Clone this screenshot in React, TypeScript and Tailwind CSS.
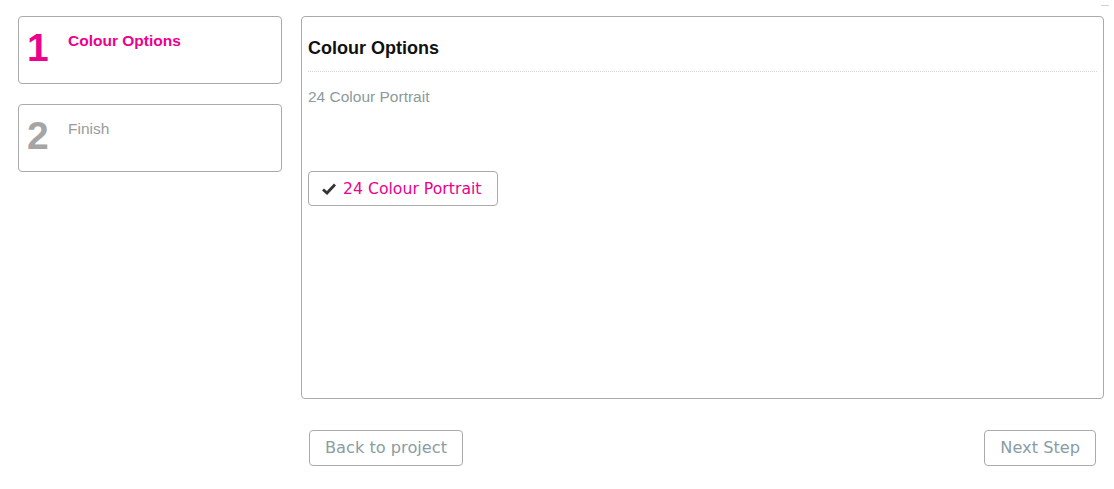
export default function App() {
  return (
    <div className="relative min-h-screen bg-white pt-4 pl-[18px] pr-[10px]" style={{ fontFamily: '"Liberation Sans", Arial, sans-serif' }}>
      {/* small mark top right */}
      <div className="absolute right-[5px] top-[5px] h-[1px] w-[8px] bg-[#d0d0d0]" />

      <div className="flex gap-[19px]">
        {/* steps */}
        <div className="flex w-[264px] shrink-0 flex-col gap-5">
          <div className="flex h-[68px] rounded-[4px] border border-[#aaaaaa] px-2 pt-[13px]">
            <div className="w-[41px] text-[39px] font-bold leading-[36px] text-[#ec008c]">1</div>
            <div className="pt-[2px] text-[15.5px] font-bold leading-[18px] text-[#ec008c]">Colour Options</div>
          </div>
          <div className="flex h-[68px] rounded-[4px] border border-[#aaaaaa] px-2 pt-[13px]">
            <div className="w-[41px] text-[39px] font-bold leading-[36px] text-[#a5a5a5]">2</div>
            <div className="pt-[2px] text-[15.5px] leading-[18px] text-[#9a9a9a]">Finish</div>
          </div>
        </div>

        {/* main */}
        <div className="flex w-[803px] flex-col">
          <div className="h-[383px] rounded-[4px] border border-[#aaaaaa] px-[6px]">
            <div className="border-b border-dotted border-[#d4d4d4] pt-[21px] pb-[13px] text-[18px] font-bold leading-[20px] text-[#111111]">
              Colour Options
            </div>
            <div className="pt-[16px] text-[15.5px] leading-[18px] text-[#8c9a9c]">24 Colour Portrait</div>
            <div className="pt-[65px]">
              <button
                type="button"
                className="flex h-[35px] items-center gap-[7px] rounded-[4px] border border-[#aaaaaa] bg-white pl-[13px] pr-[15px] text-[15.7px] text-[#ec008c]"
                style={{ fontFamily: '"DejaVu Sans", Verdana, sans-serif' }}
              >
                <svg width="14" height="12" viewBox="0 0 14 12">
                  <path d="M1 6.5 L5 10 L13 1.5" fill="none" stroke="#333333" strokeWidth="2.8" />
                </svg>
                <span>24 Colour Portrait</span>
              </button>
            </div>
          </div>

          <div className="flex justify-between px-[8px] pt-[31px]" style={{ fontFamily: '"DejaVu Sans", Verdana, sans-serif' }}>
            <button type="button" className="h-[36px] rounded-[4px] border border-[#aaaaaa] bg-white px-[15px] text-[16.2px] text-[#8a9ca4]">
              Back to project
            </button>
            <button type="button" className="h-[36px] rounded-[4px] border border-[#aaaaaa] bg-white px-[15px] text-[16.2px] text-[#8a9ca4]">
              Next Step
            </button>
          </div>
        </div>
      </div>
    </div>
  );
}
